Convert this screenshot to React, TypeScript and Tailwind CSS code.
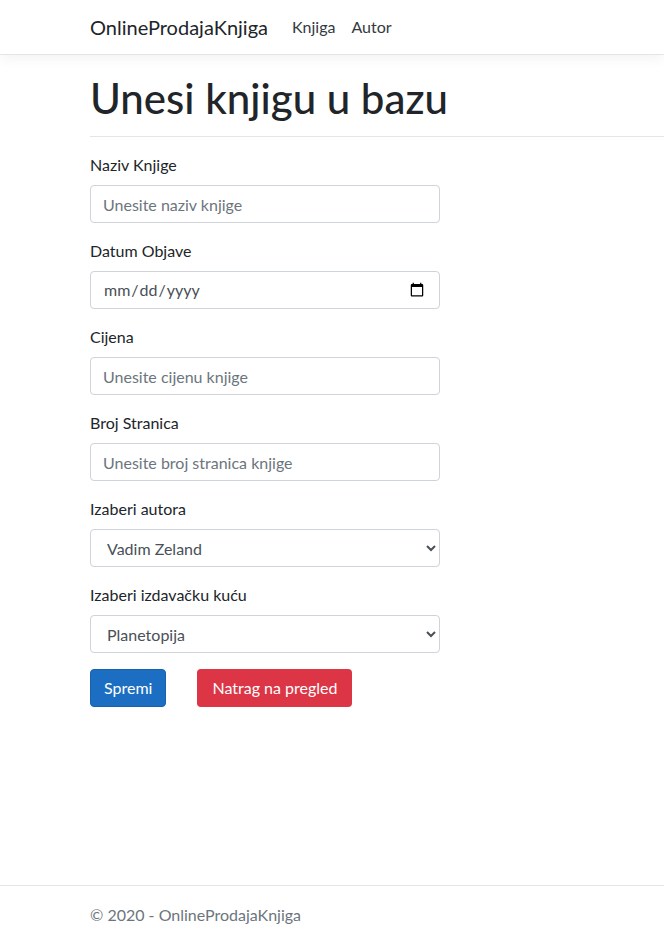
export default function App() {
  const font = { fontFamily: "Lato, 'Noto Sans', sans-serif" };
  return (
    <div className="min-h-[943px] flex flex-col bg-white text-[#212529]" style={font}>
      {/* Navbar */}
      <header className="h-[55px] border-b border-[#e5e5e5] shadow-[0_4px_12px_rgba(0,0,0,0.05)] bg-white flex items-center pl-[90px]">
        <span className="text-[20px] text-[#212529] mr-6">OnlineProdajaKnjiga</span>
        <nav className="flex gap-4 text-[16px] text-[#343a40]">
          <span>Knjiga</span>
          <span>Autor</span>
        </nav>
      </header>

      {/* Main */}
      <main className="flex-1 pl-[90px]">
        <h1 className="text-[42px] font-medium leading-[48px] mt-[19px] mb-[14px]">Unesi knjigu u bazu</h1>
        <hr className="border-t border-[#e5e5e5]" />
        <form className="w-[350px] mt-4 flex flex-col gap-4">
          <Field label="Naziv Knjige" placeholder="Unesite naziv knjige" />
          <div className="flex flex-col gap-2">
            <label className="text-[16px] leading-6">Datum Objave</label>
            <input type="date" className="h-[38px] border border-[#ced4da] rounded px-3 text-[16px] text-[#495057]" />
          </div>
          <Field label="Cijena" placeholder="Unesite cijenu knjige" />
          <Field label="Broj Stranica" placeholder="Unesite broj stranica knjige" />
          <SelectField label="Izaberi autora" value="Vadim Zeland" />
          <SelectField label="Izaberi izdavačku kuću" value="Planetopija" />
          <div className="flex gap-[31px]">
            <button type="button" className="h-[38px] px-[13px] rounded bg-[#1b6ec2] border border-[#1861ac] text-white text-[16px]">Spremi</button>
            <button type="button" className="h-[38px] px-[15px] rounded bg-[#dc3545] text-white text-[16px]">Natrag na pregled</button>
          </div>
        </form>
      </main>

      {/* Footer */}
      <footer className="border-t border-[#e5e5e5] h-[58px] flex items-center pl-[90px] text-[16px] text-[#6c757d]">
        © 2020 - OnlineProdajaKnjiga
      </footer>
    </div>
  );
}

function Field({ label, placeholder }: { label: string; placeholder: string }) {
  return (
    <div className="flex flex-col gap-2">
      <label className="text-[16px] leading-6">{label}</label>
      <input
        placeholder={placeholder}
        className="h-[38px] border border-[#ced4da] rounded px-3 text-[16px] placeholder:text-[#6c757d]"
      />
    </div>
  );
}

function SelectField({ label, value }: { label: string; value: string }) {
  return (
    <div className="flex flex-col gap-2">
      <label className="text-[16px] leading-6">{label}</label>
      <select defaultValue={value} className="h-[38px] border border-[#ced4da] rounded px-3 text-[16px] text-[#495057] bg-white">
        <option>{value}</option>
      </select>
    </div>
  );
}
